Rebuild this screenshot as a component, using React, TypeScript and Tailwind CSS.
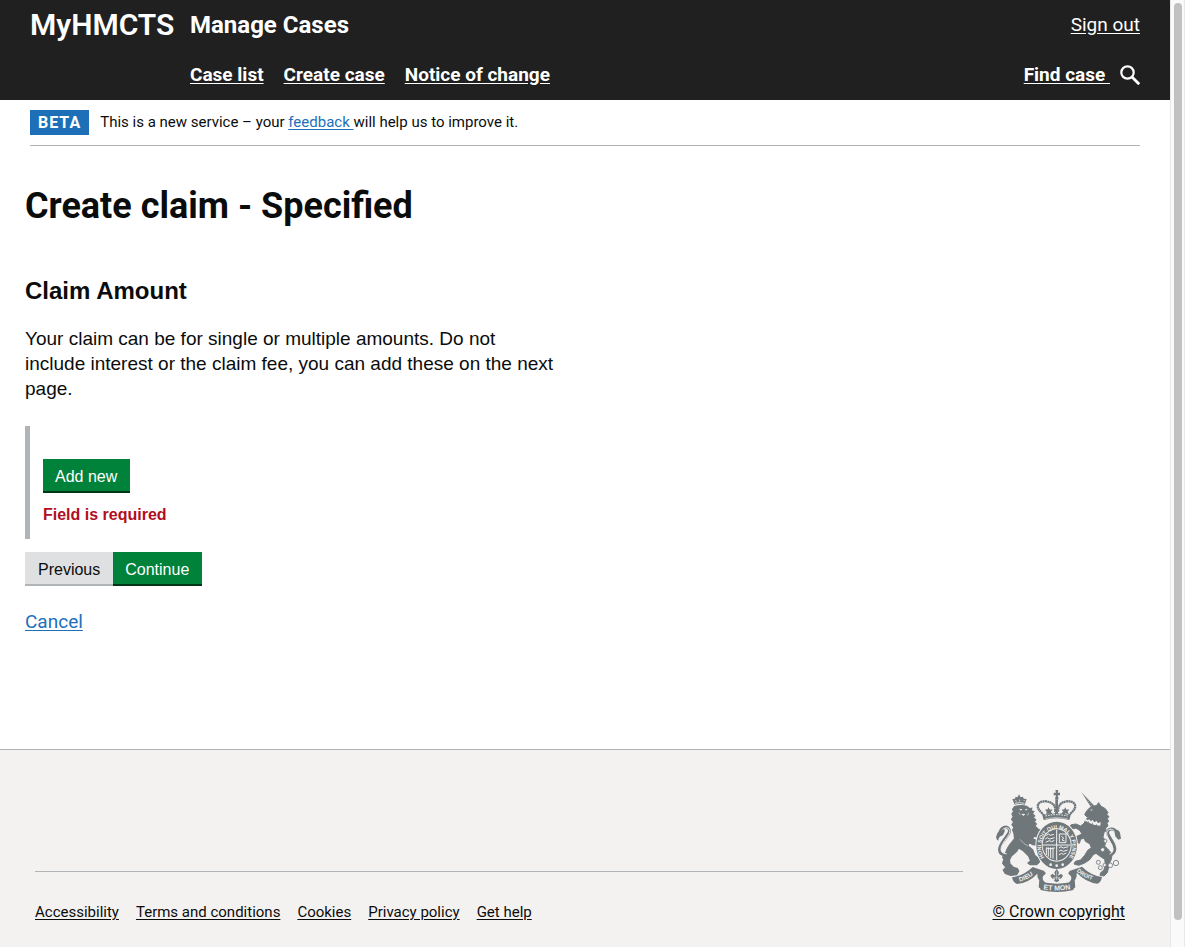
import type { ReactNode } from "react";

const transport = "font-['Roboto','Noto_Sans',sans-serif]";
const arial = "font-['Liberation_Sans',Arial,sans-serif]";

const navLinks = ["Case list", "Create case", "Notice of change"];
const footerLinks = ["Accessibility", "Terms and conditions", "Cookies", "Privacy policy", "Get help"];

function SearchIcon() {
  return (
    <svg className="h-5 w-5" viewBox="0 0 20 20" fill="none" stroke="currentColor" aria-hidden="true">
      <circle cx="7.5" cy="7.5" r="6.2" strokeWidth="2.2" />
      <path d="M12 12l7.2 7.2" strokeWidth="2.8" />
    </svg>
  );
}

function Crest() {
  return (
    <svg className="h-[102px] w-[125px]" viewBox="36 30 375 306" fill="#6f777b" aria-hidden="true">
      <defs>
        <path id="garter" d="M184 236A47 53 0 1 1 252 236" />
        <path id="left-scroll" d="M107 305Q136 297 158 276" />
        <path id="right-scroll" d="M278 274Q302 296 340 303" />
        <path id="low-scroll" d="M178 328Q218 335 262 327" />
      </defs>

      {/* crown */}
      <g>
        <path d="M214 30h9l-2 8h7v8h-7l3 12h-11l3-12h-7v-8h7z" />
        <path d="M179 120l-6-22c12 8 20 7 24-4 5 10 14 10 20 0 6 10 15 10 21 0 4 11 12 12 24 4l-6 22q-38-10-77 0z" />
        <g fill="none" stroke="#6f777b" strokeWidth="7" strokeDasharray="6 1">
          <path d="M176 101C148 78 165 62 186 64C204 66 217 76 213 96" />
          <path d="M259 101C287 78 270 62 249 64C231 66 222 76 222 96" />
        </g>
        <path d="M193 82l5 7 8-1-5 7 4 8-12-3-7 4 2-9-5-6 8-1zM243 82l5 7 8-1-5 7 4 8-12-3-7 4 2-9-5-6 8-1zM214 58h8v48h-8z" />
        <path d="M184 108q34-8 67 0" fill="none" stroke="#f3f2f1" strokeWidth="3" strokeDasharray="5 3" />
        <path d="M184 116q34-8 67 0" fill="none" stroke="#f3f2f1" strokeWidth="1.5" />
      </g>

      {/* lion */}
      <g>
        <path d="M92 74l-7-17 8-1 2-6 6 2 4-9 5 9 7-2 2 6 9 1-6 17q-15-4-30 0z" />
        <path d="M94 61l4 3M107 59v5M119 63l3-3M93 70q14-4 28 0" fill="none" stroke="#f3f2f1" strokeWidth="2.5" />
        <path stroke="#6f777b" strokeWidth="4" d="M92 80Q110 74 128 79L137 86 143 85 141 92 149 95 145 101 152 108 147 112 155 120 149 124 157 132 152 138 162 147 170 152 164 172 150 168 146 176 158 182 162 196 146 194 134 186 132 198 146 210 152 226 164 236 166 246 158 254 138 254 132 249 140 243 134 228 118 212 104 204 98 214 82 228 76 240 78 252 88 262 100 266 104 274 98 284 80 286 64 280 58 270 66 262 56 250 60 238 56 232 66 216C70 200 84 186 92 176L90 160 86 150 90 142 84 134 89 126 83 118 88 110 84 102 89 94 86 88z" />
        <path d="M105 86l10 2-4 4zM123 88l8-2-5 6zM112 101l12 1-6 6z" fill="#f3f2f1" />
        <path d="M104 97l5 8M134 98l-3 9M108 178q10 14 24 20" fill="none" stroke="#f3f2f1" strokeWidth="1.5" />
        <path d="M68 224C47 226 40 211 54 189C68 166 83 157 74 146C67 137 52 141 48 157" fill="none" stroke="#6f777b" strokeWidth="9" />
        <path d="M68 221C51 222 46 209 57 190C71 168 83 158 75 147C69 140 57 144 53 154" fill="none" stroke="#f3f2f1" strokeWidth="3" />
        <path d="M37 169q3-17 14-17 8-8 12-2-4 17-11 18-8 2-9 14-9-5-6-13z" />
      </g>

      {/* unicorn */}
      <g>
        <path d="M292 36l40 43-9 6z" />
        <path d="M298 43l26 36" stroke="#f3f2f1" strokeWidth="1.5" strokeDasharray="3 5" />
        <path stroke="#6f777b" strokeWidth="3" d="M314 86L322 81 338 76 344 68 350 78 364 86 372 98 368 103 375 110 370 116 374 124 369 130 372 138 365 144 366 152 360 158 357 172C364 178 366 190 362 198L376 212 384 224 382 238 376 250 374 262 370 278 360 288 348 286 350 278 360 270 364 252 362 238 350 230 336 220 328 224 316 240 300 250 284 256 270 252 274 244 290 240 302 226 312 210 322 204 318 192 304 184 300 174 290 178 286 190 276 186 276 170 294 162 288 152 276 144 262 148 255 142 262 134 276 132 290 138 300 130 306 118 322 106 310 112 302 104 306 96z" />
        <path d="M319 89l7-1-4 5z" fill="#f3f2f1" />
        <path d="M305 116l6 5 5-3 4 6 6-4 5 7 7-4 4 7 8-4-1 11q-26-1-47-15z" fill="#f3f2f1" />
        <path d="M305 124q22 16 42 17M313 124l2 6M325 128v7M338 133l-1 7" fill="none" stroke="#6f777b" strokeWidth="2.5" />
        <path d="M374 226C389 223 397 212 389 193C375 166 364 160 375 149C388 143 400 154 404 166" fill="none" stroke="#6f777b" strokeWidth="9" />
        <path d="M377 222C387 219 390 209 383 194C370 170 362 159 374 149C385 144 393 154 397 162" fill="none" stroke="#f3f2f1" strokeWidth="3" />
        <path d="M391 154q12-9 17 4l3 18-8 3-9-10z" />
        <g fill="#f3f2f1" stroke="#6f777b" strokeWidth="2.5">
          <circle cx="364" cy="183" r="5" />
          <circle cx="356" cy="209" r="6" />
          <circle cx="343" cy="247" r="6" />
          <circle cx="349" cy="263" r="6" />
          <circle cx="362" cy="255" r="5" />
          <circle cx="379" cy="256" r="7" />
          <circle cx="396" cy="249" r="8" />
        </g>
      </g>

      {/* garter and quartered arms */}
      <ellipse cx="218" cy="196" rx="64" ry="75" fill="#f3f2f1" />
      <ellipse cx="218" cy="196" rx="61" ry="71" />
      <ellipse cx="218" cy="195" rx="45" ry="50" fill="#f3f2f1" />
      <ellipse cx="218" cy="195" rx="42" ry="47" />
      <path d="M177 195h82M218 149v92" stroke="#f3f2f1" strokeWidth="3" />
      <g fill="none" stroke="#f3f2f1" strokeWidth="3">
        <path d="M187 167l6-5 6 4 11-3M184 177l6-4 7 4 15-4M185 187l11-5 7 3 8-4" />
        <path d="M226 162h20v26h-20zM232 169l7 5-5 6 8 3" />
        <path d="M187 203v22M193 202v28M200 202v32M207 202v34M187 204q15 5 25 0" />
        <path d="M225 204l6-4 7 4 15-4M225 214l6-4 7 4 13-4M225 225l7-5 6 3 9-4" />
      </g>
      <g fill="#f3f2f1">
        <circle cx="200" cy="254" r="4" />
        <circle cx="218" cy="257" r="4" />
        <circle cx="236" cy="254" r="4" />
      </g>
      <text fontSize="16" textAnchor="middle" fill="#f3f2f1" fontFamily="Liberation Sans, Arial, sans-serif" fontWeight="700">
        <textPath href="#garter" startOffset="50%">HONI SOIT QUI MAL Y PENSE</textPath>
      </text>

      {/* motto ribbon */}
      <path d="M84 292q34-4 62-31l35 12-3 10-18-2q-26 28-61 31-12-4-15-20zM354 291q-34-5-60-31l-38 13 4 10 20-3q26 28 60 31 12-4 14-20z" />
      <path d="M160 280q-2 12 6 22l-2 20 14 10 4-26q-14-12 4-26l-6-6q-15-2-20 6zM278 280q2 12-6 22l2 20-14 10-4-26q14-12-4-26l6-6q15-2 20 6z" />
      <path d="M166 304q52 14 106 0l-4 26q-49 12-98 0z" />
      <path d="M218 267l7 10-3 10 9-6 6 6-6 9-9-1 4 7-8 5-8-5 4-7-9 1-6-9 6-6 9 6-3-10z" />
      <path d="M218 274v26M208 293h20" stroke="#f3f2f1" strokeWidth="1.5" />
      <g fill="#f3f2f1" fontFamily="Liberation Sans, Arial, sans-serif" fontWeight="700">
        <text fontSize="19"><textPath href="#left-scroll">DIEU</textPath></text>
        <text fontSize="17"><textPath href="#right-scroll">DROIT</textPath></text>
        <text fontSize="21"><textPath href="#low-scroll">ET MON</textPath></text>
      </g>
    </svg>
  );
}

function Button({ secondary = false, children }: { secondary?: boolean; children: ReactNode }) {
  return (
    <button
      type="button"
      className={`${arial} ${
        secondary
          ? "border-[#b1b4b6] bg-[#dee0e2] pl-[13px] text-[#0b0c0c]"
          : "border-[#003618] bg-[#00823b] pl-3 text-white"
      } h-[34px] cursor-pointer border-b-2 pr-[13px] pt-1 text-base leading-7`}
    >
      {children}
    </button>
  );
}

export default function App() {
  return (
    <div className="flex min-h-screen bg-white text-[#0b0c0c]">
      <div className={`${transport} flex min-w-0 flex-1 flex-col`}>
        <header className="bg-[#202020] px-[30px] text-white">
          <div className="flex h-[50px] items-center">
            <a href="#home" className="w-40 text-3xl font-semibold">MyHMCTS</a>
            <a href="#manage" className="flex-1 text-2xl font-bold">Manage Cases</a>
            <a href="#signout" className="text-[19px] underline underline-offset-2">Sign out</a>
          </div>
          <div className="flex h-[50px] items-center text-[19px] font-bold">
            <nav aria-label="Primary" className="flex flex-1 gap-5 pl-40">
              {navLinks.map((label) => (
                <a key={label} href="#nav" className="underline underline-offset-2">{label}</a>
              ))}
            </nav>
            <a href="#find" className="flex items-center gap-[10px]">
              <span className="whitespace-pre underline underline-offset-2">{"Find case "}</span>
              <SearchIcon />
            </a>
          </div>
        </header>

        <div className="mx-[30px] flex items-start gap-[11px] border-b border-[#b1b4b6] py-[10px]">
          <strong className="bg-[#1d70b8] px-2 text-base font-bold leading-[25px] tracking-[1px] text-white">BETA</strong>
          <p className="text-[15px] leading-6">
            This is a new service – your{" "}
            <a href="#feedback" className="whitespace-pre text-[#1d70b8] underline underline-offset-2">{"feedback "}</a>
            will help us to improve it.
          </p>
        </div>

        <main className="flex flex-col items-start px-[25px] pb-[115px] pt-10">
          <h1 className="text-4xl font-bold leading-10">Create claim - Specified</h1>
          <h2 className={`${arial} mt-[50px] text-2xl font-bold leading-[30px]`}>Claim Amount</h2>
          <p className={`${arial} mt-5 max-w-[530px] text-[19px] leading-[25px]`}>
            Your claim can be for single or multiple amounts. Do not include interest or the claim fee, you can add
            these on the next page.
          </p>
          <section className={`${arial} mt-[25px] flex flex-col items-start gap-3 border-l-5 border-[#b1b4b6] pb-[15px] pl-[13px] pt-[33px]`}>
            <Button>Add new</Button>
            <p className="text-base font-bold leading-[19px] text-[#b10e1e]">Field is required</p>
          </section>
          <div className="mt-[13px] flex">
            <Button secondary>Previous</Button>
            <Button>Continue</Button>
          </div>
          <a href="#cancel" className="mt-[23px] text-[19px] leading-[25px] text-[#1d70b8] underline underline-offset-2">Cancel</a>
        </main>

        <footer className="flex flex-1 items-start gap-[30px] border-t border-[#b1b4b6] bg-[#f3f2f1] pl-[35px] pr-[45px] pt-10">
          <nav aria-label="Footer" className="mt-[81px] flex flex-1 gap-[17px] border-t border-[#b1b4b6] pt-[30px] text-[15px] leading-5">
            {footerLinks.map((label) => (
              <a key={label} href="#footer" className="underline underline-offset-2">{label}</a>
            ))}
          </nav>
          <a href="#copyright" className="flex flex-col items-center gap-[10px] text-base leading-5 underline underline-offset-2">
            <Crest />
            <span>© Crown copyright</span>
          </a>
        </footer>
      </div>

      <div className="sticky top-0 flex h-screen w-[15px] justify-center border-x border-[#e8e8e8] bg-[#fafafa] pb-[27px] pt-[3px]" aria-hidden="true">
        <div className="w-2 rounded-full bg-[#c1c1c1]" />
      </div>
    </div>
  );
}
